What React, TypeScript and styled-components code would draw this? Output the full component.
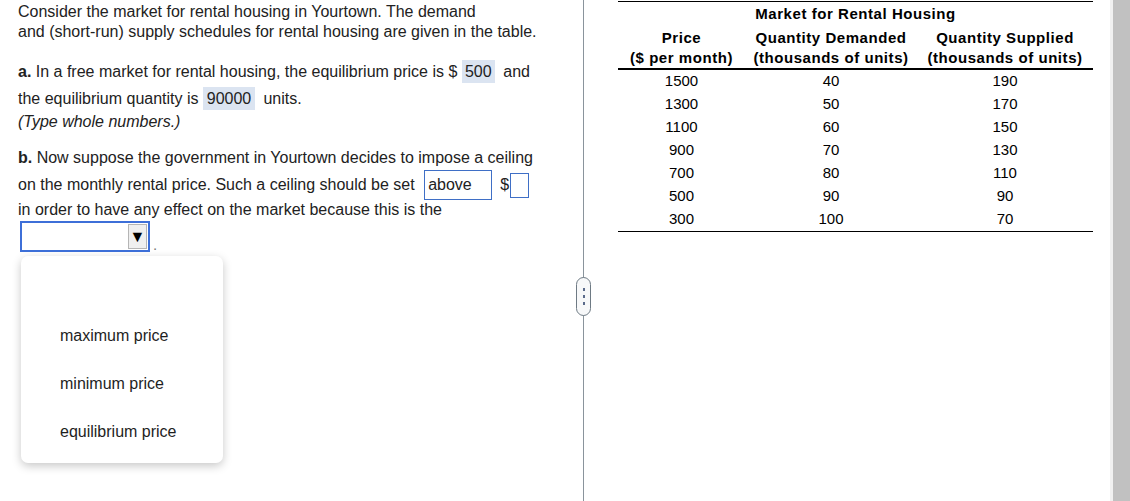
import React from 'react';
import styled, { createGlobalStyle } from 'styled-components';

const GlobalStyle = createGlobalStyle`
  html, body {
    margin: 0;
    padding: 0;
    background: #ffffff;
  }
  body {
    font-family: "Liberation Sans", Arial, sans-serif;
    color: #222222;
  }
`;

const rows = [
  { price: 1500, demanded: 40, supplied: 190 },
  { price: 1300, demanded: 50, supplied: 170 },
  { price: 1100, demanded: 60, supplied: 150 },
  { price: 900, demanded: 70, supplied: 130 },
  { price: 700, demanded: 80, supplied: 110 },
  { price: 500, demanded: 90, supplied: 90 },
  { price: 300, demanded: 100, supplied: 70 },
];

const options = ['maximum price', 'minimum price', 'equilibrium price'];

const App = () => {
  return (
    <>
      <GlobalStyle />
      <Page>
        <LeftPane>
          <Intro>
            Consider the market for rental housing in Yourtown. The demand
            <br />
            and (short-run) supply schedules for rental housing are given in the table.
          </Intro>

          {/* part a */}
          <Part>
            <Line $h={28}>
              <b>a.</b> In a free market for rental housing, the equilibrium price is ${' '}
              <Answer $w={33}>500</Answer> and
            </Line>
            <Line $h={26}>
              the equilibrium quantity is <Answer $w={52}>90000</Answer> units.
            </Line>
            <Hint>(Type whole numbers.)</Hint>
          </Part>

          {/* part b */}
          <PartB>
            <Line $h={26}>
              <b>b.</b> Now suppose the government in Yourtown decides to impose a ceiling
            </Line>
            <Line $h={26}>
              on the monthly rental price. Such a ceiling should be set{' '}
              <TextBox $w={68} $gap={5}>above</TextBox>
              <Dollar>$</Dollar>
              <TextBox $w={19} $h={25} />
            </Line>
            <Line $h={26}>in order to have any effect on the market because this is the</Line>
            <SelectRow>
              <Select>
                <SelectArrow>▼</SelectArrow>
              </Select>
              <Period>.</Period>
            </SelectRow>
            <Menu>
              {options.map((o) => (
                <MenuItem key={o}>{o}</MenuItem>
              ))}
            </Menu>
          </PartB>
        </LeftPane>

        <Divider>
          <Handle>
            <Dot />
            <Dot />
            <Dot />
          </Handle>
        </Divider>

        <RightPane>
          <Table>
            <colgroup>
              <col style={{ width: 127 }} />
              <col style={{ width: 172 }} />
              <col style={{ width: 176 }} />
            </colgroup>
            <thead>
              <tr>
                <TitleCell colSpan={3}>Market for Rental Housing</TitleCell>
              </tr>
              <tr>
                <HeadCell>
                  Price
                  <br />
                  ($ per month)
                </HeadCell>
                <HeadCell>
                  Quantity Demanded
                  <br />
                  (thousands of units)
                </HeadCell>
                <HeadCell>
                  Quantity Supplied
                  <br />
                  (thousands of units)
                </HeadCell>
              </tr>
            </thead>
            <tbody>
              {rows.map((r, i) => (
                <tr key={r.price}>
                  <DataCell $last={i === rows.length - 1}>{r.price}</DataCell>
                  <DataCell $last={i === rows.length - 1}>{r.demanded}</DataCell>
                  <DataCell $last={i === rows.length - 1}>{r.supplied}</DataCell>
                </tr>
              ))}
            </tbody>
          </Table>
        </RightPane>

        <Scrollbar />
      </Page>
    </>
  );
};
export default App;

const Page = styled.div`
  display: flex;
  width: 1130px;
  height: 501px;
  overflow: hidden;
`;

const LeftPane = styled.div`
  width: 583px;
  flex-shrink: 0;
  padding: 2px 0 0 18px;
  box-sizing: border-box;
  font-size: 16px;
`;

const Intro = styled.div`
  line-height: 20px;
`;

const Part = styled.div`
  margin-top: 16px;
`;

const PartB = styled.div`
  margin-top: 13px;
`;

const Line = styled.div<{ $h: number }>`
  height: ${(p) => p.$h}px;
  line-height: ${(p) => p.$h}px;
  white-space: nowrap;
`;

const Hint = styled.div`
  font-style: italic;
  line-height: 20px;
`;

const Answer = styled.span<{ $w: number }>`
  display: inline-block;
  width: ${(p) => p.$w}px;
  height: 23px;
  line-height: 23px;
  text-align: center;
  background: #dbe4f1;
  margin-right: 4px;
  vertical-align: middle;
  position: relative;
  top: -1px;
`;

const TextBox = styled.span<{ $w: number; $h?: number; $gap?: number }>`
  display: inline-block;
  box-sizing: border-box;
  width: ${(p) => p.$w}px;
  height: ${(p) => p.$h ?? 30}px;
  line-height: ${(p) => (p.$h ?? 30) - 2}px;
  margin-left: ${(p) => p.$gap ?? 0}px;
  padding-left: 3px;
  border: 1px solid #3f6fc6;
  background: #ffffff;
  vertical-align: middle;
  position: relative;
  top: -1px;
`;

const Dollar = styled.span`
  margin: 0 1px 0 8px;
`;

const SelectRow = styled.div`
  display: flex;
  align-items: flex-end;
  margin: -2px 0 0 2px;
  height: 31px;
`;

const Select = styled.div`
  width: 130px;
  height: 31px;
  box-sizing: border-box;
  border: 2px solid #3d6fd8;
  background: #ffffff;
  display: flex;
  justify-content: flex-end;
  padding: 1px;
`;

const SelectArrow = styled.div`
  width: 19px;
  box-sizing: border-box;
  background: #efefef;
  border: 1px solid #b5b5b5;
  color: #000000;
  font-size: 16px;
  display: flex;
  align-items: center;
  justify-content: center;
`;

const Period = styled.span`
  font-size: 15px;
  line-height: 15px;
  margin-left: 3px;
  color: #777777;
`;

const Menu = styled.div`
  width: 202px;
  height: 207px;
  box-sizing: border-box;
  margin: 4px 0 0 3px;
  padding-top: 56px;
  background: #ffffff;
  border-radius: 7px;
  box-shadow: 0 3px 10px rgba(0, 0, 0, 0.22);
`;

const MenuItem = styled.div`
  height: 48px;
  line-height: 48px;
  padding-left: 39px;
  color: #1e1e1e;
`;

const Divider = styled.div`
  width: 1px;
  flex-shrink: 0;
  background: #8a949c;
  position: relative;
`;

const Handle = styled.div`
  position: absolute;
  left: -7px;
  top: 277px;
  width: 15px;
  height: 39px;
  box-sizing: border-box;
  border: 1px solid #6e7a84;
  border-radius: 8px;
  background: #f7f8f9;
  display: flex;
  flex-direction: column;
  align-items: center;
  justify-content: center;
  gap: 4px;
`;

const Dot = styled.span`
  width: 2px;
  height: 3px;
  background: #5a6a8a;
`;

const RightPane = styled.div`
  flex: 1;
  padding: 1px 0 0 34px;
  box-sizing: border-box;
`;

const Table = styled.table`
  border-collapse: collapse;
  table-layout: fixed;
  width: 475px;
  font-family: "Liberation Sans", Arial, sans-serif;
  font-size: 15px;
  color: #000000;
  border-top: 1px solid #000000;
`;

const TitleCell = styled.th`
  height: 24px;
  padding: 0;
  font-weight: bold;
  letter-spacing: 0.55px;
  text-align: center;
  line-height: 24px;
`;

const HeadCell = styled.th`
  height: 42px;
  padding: 0;
  vertical-align: bottom;
  font-weight: bold;
  letter-spacing: 0.55px;
  line-height: 20px;
  text-align: center;
  white-space: nowrap;
  border-bottom: 2px solid #000000;
`;

const DataCell = styled.td<{ $last?: boolean }>`
  box-sizing: border-box;
  height: 23px;
  padding: 0 0 1px;
  line-height: 22px;
  text-align: center;
  border-bottom: ${(p) => (p.$last ? '1px solid #000000' : 'none')};
`;

const Scrollbar = styled.div`
  width: 20px;
  flex-shrink: 0;
  box-sizing: border-box;
  border-left: 3px solid #f1f1f1;
  background: #c1c1c1;
`;
